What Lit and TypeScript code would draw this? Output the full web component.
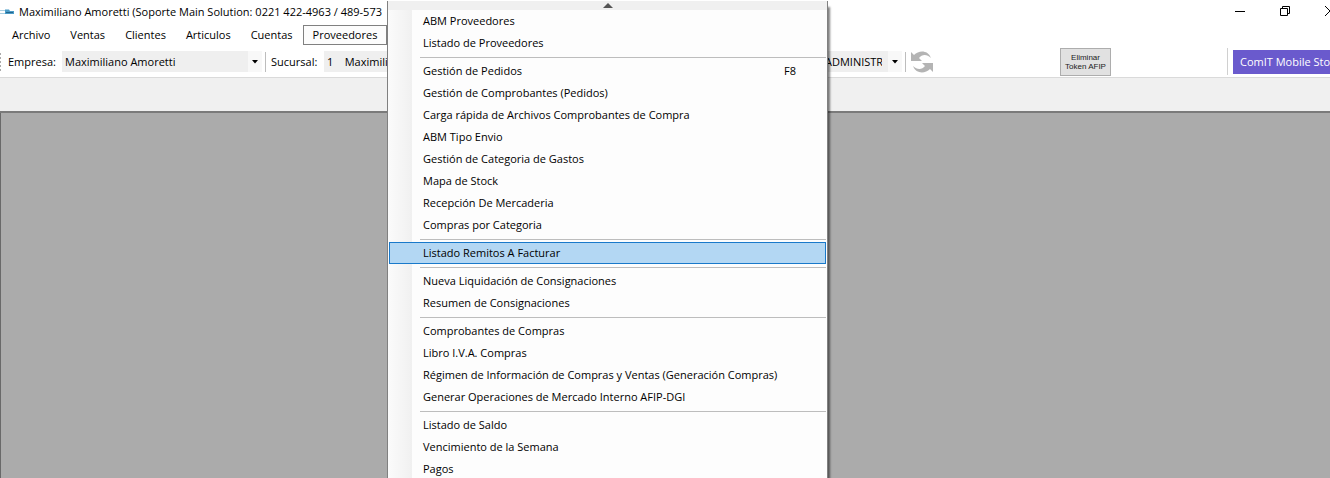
import { LitElement, html, svg, css } from "lit";
import { customElement } from "lit/decorators.js";
import { classMap } from "lit/directives/class-map.js";

type Entry = { label: string; key?: string; active?: boolean };

const groups: Entry[][] = [
  [{ label: "ABM Proveedores" }, { label: "Listado de Proveedores" }],
  [
    { label: "Gestión de Pedidos", key: "F8" },
    { label: "Gestión de Comprobantes (Pedidos)" },
    { label: "Carga rápida de Archivos Comprobantes de Compra" },
    { label: "ABM Tipo Envio" },
    { label: "Gestión de Categoria de Gastos" },
    { label: "Mapa de Stock" },
    { label: "Recepción De Mercaderia" },
    { label: "Compras por Categoria" },
  ],
  [{ label: "Listado Remitos A Facturar", active: true }],
  [{ label: "Nueva Liquidación de Consignaciones" }, { label: "Resumen de Consignaciones" }],
  [
    { label: "Comprobantes de Compras" },
    { label: "Libro I.V.A. Compras" },
    { label: "Régimen de Información de Compras y Ventas (Generación Compras)" },
    { label: "Generar Operaciones de Mercado Interno AFIP-DGI" },
  ],
  [{ label: "Listado de Saldo" }, { label: "Vencimiento de la Semana" }, { label: "Pagos" }],
];

@customElement("drop-menu")
export class DropMenu extends LitElement {
  static styles = css`
    :host {
      display: block;
      box-sizing: border-box;
      border: solid #808080;
      border-width: 0 1px;
      background: linear-gradient(90deg, #fbfbfb, #f0f0f0 24px, #fdfdfd 24px);
      box-shadow: 3px 5px 2px -1px rgba(0, 0, 0, 0.5);
    }
    .scroll {
      display: flex;
      justify-content: center;
      align-items: center;
      width: 100%;
      height: 9px;
      padding: 0;
      border: 0;
      background: #f0f0f0;
    }
    .group {
      margin: 0;
      padding: 0 1px;
      list-style: none;
    }
    .group + .group::before {
      content: "";
      display: block;
      height: 1px;
      margin: 3px 0 2px 31px;
      background: #bdbdbd;
    }
    .item {
      display: flex;
      justify-content: space-between;
      align-items: center;
      box-sizing: border-box;
      width: 100%;
      height: 22px;
      padding: 0 29px 0 33px;
      border: 1px solid transparent;
      background: none;
      color: #000;
      font: inherit;
      white-space: nowrap;
    }
    .active {
      border-color: #1979ca;
      background: #b3d7f3;
    }
  `;

  render() {
    return html`
      <button class="scroll" aria-label="Subir">
        <svg width="10" height="5" viewBox="0 0 10 5"><path d="M0 5 5 0 10 5Z" fill="#555" /></svg>
      </button>
      ${groups.map(
        (group) => html`<ul class="group">
          ${group.map(
            (e) => html`<li>
              <button class=${classMap({ item: true, active: !!e.active })}>
                <span>${e.label}</span>${e.key ? html`<span>${e.key}</span>` : ""}
              </button>
            </li>`
          )}
        </ul>`
      )}
    `;
  }
}

@customElement("app-root")
export class AppRoot extends LitElement {
  static styles = css`
    :host {
      display: flex;
      flex-direction: column;
      position: relative;
      height: 100vh;
      overflow: hidden;
      background: #fff;
      color: #000;
      font: 11px/16px "Open Sans", "Noto Sans", sans-serif;
    }
    .title {
      display: flex;
      align-items: center;
      height: 24px;
    }
    .logo {
      margin-right: 5px;
    }
    .caption {
      flex: 1;
      white-space: nowrap;
    }
    .window {
      display: flex;
      margin-right: -22px;
      height: 22px;
      align-self: flex-start;
    }
    .window button {
      display: flex;
      align-items: center;
      justify-content: center;
      width: 45px;
      padding: 0;
      border: 0;
      background: none;
    }
    .menubar {
      display: flex;
      height: 22px;
      padding-left: 2px;
      align-items: center;
    }
    .menubar button {
      box-sizing: border-box;
      height: 20px;
      padding: 0 9px;
      border: 1px solid transparent;
      background: none;
      color: inherit;
      font: inherit;
      white-space: nowrap;
    }
    .menubar .open {
      border-color: #808080;
      background: #fcfcfc;
    }
    .tools {
      display: flex;
      align-items: center;
      height: 31px;
      border-bottom: 1px solid #dadada;
      white-space: nowrap;
    }
    .tools > * {
      flex: none;
    }
    .grip {
      width: 1px;
      height: 18px;
      margin-right: 7px;
      background: repeating-linear-gradient(#aaa 0 2px, transparent 2px 4px);
    }
    .combo {
      display: flex;
      align-items: center;
      height: 21px;
      background: #f8f8f8;
    }
    .combo select {
      appearance: none;
      height: 21px;
      padding: 0 6px 0 3px;
      border: 0;
      border-radius: 0;
      background: #efefef;
      color: inherit;
      font: inherit;
      white-space: pre;
    }
    .combo svg {
      margin: 0 4px;
    }
    .company-label {
      width: 54px;
    }
    .branch-label {
      width: 53px;
    }
    .company {
      width: 186px;
    }
    .branch {
      width: 290px;
    }
    .user-label {
      width: 185px;
    }
    .user {
      width: 66px;
      text-overflow: clip;
    }
    .rule {
      width: 1px;
      height: 20px;
      margin: 0 5px 0 3px;
      background: #bdbdbd;
    }
    .refresh {
      display: flex;
      padding: 0;
      border: 0;
      background: none;
    }
    .token {
      width: 51px;
      height: 28px;
      margin-left: 127px;
      padding: 0;
      border: 1px solid #adadad;
      background: #e1e1e1;
      color: #222;
      font: 8px/9px "Liberation Sans", sans-serif;
    }
    .tools .store {
      display: flex;
      align-items: center;
      flex: 1 0 auto;
      height: 27px;
      margin-left: 116px;
      padding-left: 5px;
      border-left: 1px solid #d0d0d0;
    }
    .store a {
      flex: 1;
      padding: 4px 0 4px 7px;
      background: #6a5acd;
      color: #fff;
      text-decoration: none;
    }
    .strip {
      height: 33px;
      border-bottom: 2px solid #7a7a7a;
      background: #f0f0f0;
    }
    .workspace {
      flex: 1;
      border-left: 1px solid #696969;
      background: #ababab;
    }
    .menu {
      position: absolute;
      top: 1px;
      left: 387px;
      width: 441px;
    }
  `;

  private arrow() {
    return svg`<svg width="6" height="4" viewBox="0 0 6 4"><path d="M0 0H6L3 3.5Z" fill="#000" /></svg>`;
  }

  render() {
    const menus = ["Archivo", "Ventas", "Clientes", "Articulos", "Cuentas", "Proveedores"];
    return html`
      <header class="title">
        <svg class="logo" width="14" height="8" viewBox="0 0 14 8">
          <path d="M0 2.5H6M0 5.5H6" stroke="#a9cfe2" stroke-width="1.2" />
          <path d="M5 1.5H9L10 3H14V6H5Z" fill="#4a9cc8" />
          <path d="M6 4.5H13" stroke="#24658d" />
        </svg>
        <span class="caption">Maximiliano Amoretti (Soporte Main Solution: 0221 422-4963 / 489-573</span>
        <div class="window">
          <button aria-label="Minimizar">
            <svg width="10" height="10" viewBox="0 0 10 10"><path d="M0 5.5H10" stroke="#000" /></svg>
          </button>
          <button aria-label="Restaurar">
            <svg width="10" height="10" viewBox="0 0 10 10" fill="none" stroke="#000">
              <path d="M.5 2.5H7.5V9.5H.5ZM2.5 2V.5H9.5V7.5H8" />
            </svg>
          </button>
          <button aria-label="Cerrar">
            <svg width="10" height="10" viewBox="0 0 10 10"><path d="M0 0 10 10M10 0 0 10" stroke="#000" /></svg>
          </button>
        </div>
      </header>
      <nav class="menubar">
        ${menus.map(
          (m) => html`<button class=${classMap({ open: m === "Proveedores" })}>${m}</button>`
        )}
      </nav>
      <div class="tools">
        <span class="grip"></span>
        <label class="company-label" for="company">Empresa:</label>
        <div class="combo">
          <select class="company" id="company"><option>Maximiliano Amoretti</option></select>${this.arrow()}
        </div>
        <span class="rule"></span>
        <label class="branch-label" for="branch">Sucursal:</label>
        <div class="combo">
          <select class="branch" id="branch"><option>1&nbsp;&nbsp;&nbsp;&nbsp;Maximiliano Amoretti</option></select>${this.arrow()}
        </div>
        <span class="rule"></span>
        <label class="user-label" for="user">Usuario:</label>
        <div class="combo">
          <select class="user" id="user"><option>ADMINISTRADOR</option></select>${this.arrow()}
        </div>
        <span class="rule"></span>
        <button class="refresh" aria-label="Actualizar">
          <svg width="22" height="22" viewBox="0 0 22 22" fill="#b4b4b4">
            <path d="M0 1 3 4C8-1 17-1 20 7C16 3 11 3 8 7L11 10H0Z" />
            <path d="M22 21 19 18C14 23 5 23 2 15C6 19 11 19 14 15L11 12H22Z" />
          </svg>
        </button>
        <button class="token">Eliminar<br />Token AFIP</button>
        <div class="store"><a href="#store">ComIT Mobile Store</a></div>
      </div>
      <div class="strip"></div>
      <main class="workspace"></main>
      <drop-menu class="menu"></drop-menu>
    `;
  }
}
